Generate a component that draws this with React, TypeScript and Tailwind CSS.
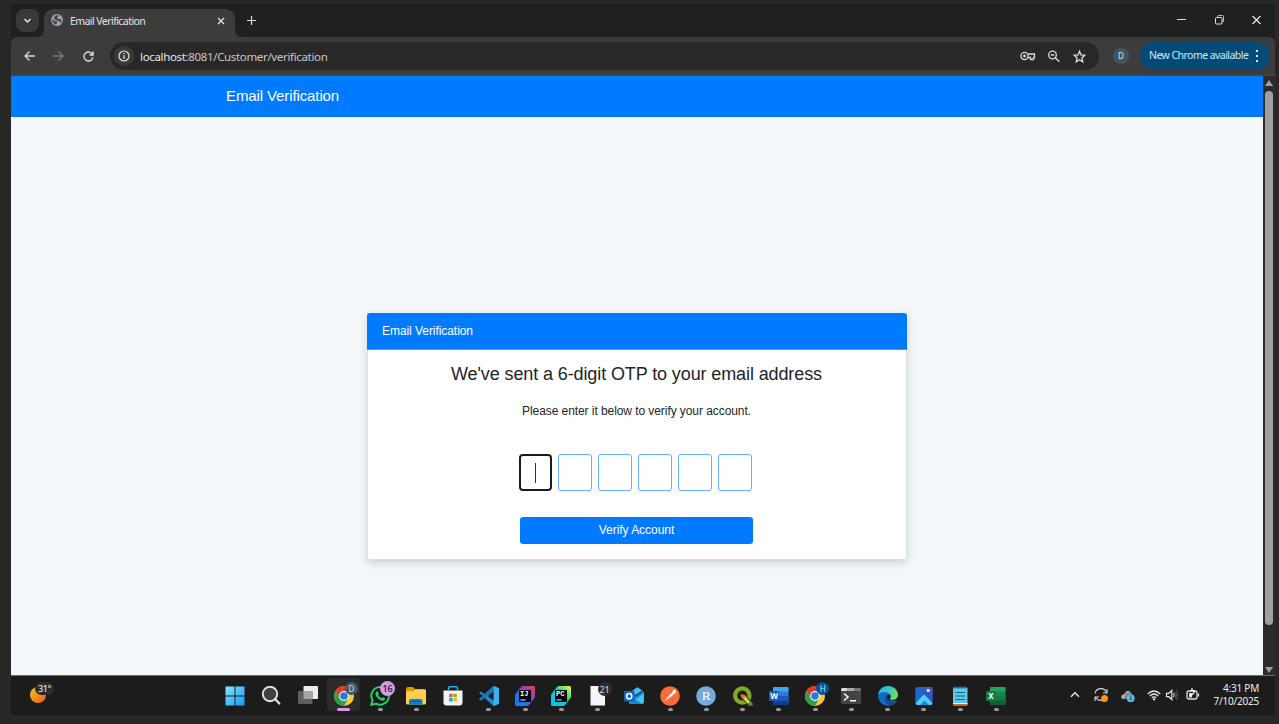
import React from "react";

type P = { children: React.ReactNode; size?: number; box?: string };

function Svg({ children, size = 20, box = "0 0 20 20" }: P) {
  return (
    <svg width={size} height={size} viewBox={box} fill="none" className="block shrink-0">
      {children}
    </svg>
  );
}

function Chrome({ letter, fill }: { letter: string; fill: string }) {
  return (
    <div className="relative">
      <Svg>
        <circle cx="10" cy="10" r="10" fill="#fcc934" />
        <path d="M10 5.200H18.770A10 10 0 0 0 1.340 5L5.840 12.400L10 10Z" fill="#e33b2e" />
        <path d="M1.340 5A10 10 0 0 0 10 20L14.160 12.400L10 10L5.840 12.400Z" fill="#2aa24c" />
        <circle cx="10" cy="10" r="4.900" fill="#fff" />
        <circle cx="10" cy="10" r="3.800" fill="#2878e8" />
      </Svg>
      <span
        className={`absolute -top-[4px] left-[11px] flex h-[13px] w-[13px] items-center justify-center rounded-full text-[8px] leading-none text-[#c9e6f7] ${fill}`}
      >
        {letter}
      </span>
    </div>
  );
}

function JetBrains({ letters, id, a, b, c }: { letters: string; id: string; a: string; b: string; c: string }) {
  return (
    <Svg>
      <defs>
        <linearGradient id={id} x1="0" y1="1" x2="1" y2="0">
          <stop offset="0.25" stopColor={a} />
          <stop offset="0.6" stopColor={b} />
          <stop offset="1" stopColor={c} />
        </linearGradient>
      </defs>
      <path d="M6 1Q6.600 0 8 0H18.500Q20 0 20 1.500V10.500Q20 11.500 19.300 12.300L14 19Q13.300 20 12 20H1.500Q0 20 0 18.500V9.500Q0 8.500 .6 7.800Z" fill={`url(#${id})`} />
      <path d="M4 4H16V16H4Z" fill="#000" />
      <text x="5" y="10" fontSize="7" fontWeight="700" fontFamily="Liberation Mono, monospace" fill="#fff">{letters}</text>
      <path d="M5.500 14H10.500" stroke="#fff" strokeWidth="1" />
    </Svg>
  );
}

function OfficeIcon({ letter, tones, plate }: { letter: string; tones: string[]; plate: string }) {
  return (
    <Svg>
      <rect x="4" y="1" width="15.500" height="18" rx="1.200" fill={tones[1]} />
      <path d="M5.200 1H18.300Q19.500 1 19.500 2.200V5.500H4V2.200Q4 1 5.200 1Z" fill={tones[0]} />
      <path d="M4 10H19.500V14.500H4Z" fill={tones[2]} />
      <path d="M4 14.500H19.500V17.800Q19.500 19 18.300 19H5.200Q4 19 4 17.800Z" fill={tones[3]} />
      <rect x="0" y="5" width="10" height="10" rx="1" fill={plate} />
      <text x="5" y="12.800" textAnchor="middle" fontSize="8" fontWeight="700" fontFamily="Noto Sans, sans-serif" fill="#fff">{letter}</text>
    </Svg>
  );
}

const WindowsLogo = () => (
  <Svg>
    <defs>
      <linearGradient id="win" x1="0" y1="0" x2="1" y2="1" gradientUnits="objectBoundingBox">
        <stop stopColor="#8be3fd" />
        <stop offset="1" stopColor="#129bf5" />
      </linearGradient>
    </defs>
    <path d="M.5.500H9.500V9.500H.5ZM10.500.500H19.500V9.500H10.500ZM.5 10.500H9.500V19.500H.5ZM10.500 10.500H19.500V19.500H10.500Z" fill="url(#win)" />
  </Svg>
);

const Search = () => (
  <Svg>
    <circle cx="9" cy="8" r="7.200" fill="#414141" stroke="#e2e2e2" strokeWidth="1.900" />
    <path d="M14 13L18.300 17.500" stroke="#e2e2e2" strokeWidth="2.300" strokeLinecap="round" />
  </Svg>
);

const TaskView = () => (
  <Svg>
    <rect x="5.500" y="0" width="14.500" height="13" rx=".8" fill="#ececec" />
    <rect x="0" y="5" width="14.500" height="13" rx=".8" fill="#606060" />
    <path d="M5.500 5H14.500V13H5.500Z" fill="#a5a5a5" />
  </Svg>
);

const WhatsApp = () => (
  <div className="relative">
    <Svg>
      <path d="M1.200 19L2.500 14.200A8.800 8.800 0 1 1 6 17.600Z" stroke="#25d366" strokeWidth="1.900" strokeLinejoin="round" />
      <path d="M6.300 5.700Q7.400 4.900 8 6L8.700 7.600Q8.900 8.200 8 9.100Q9.200 11.400 11.500 12.300L12.600 11.200L15 12.300Q15.200 14 13.500 14.700Q11.300 15.500 7.900 12.300Q4 8.300 6.300 5.700Z" fill="#25d366" />
    </Svg>
    <span className="absolute -top-[5px] left-[10px] flex h-[15px] w-[15px] items-center justify-center rounded-full bg-[#d69be4] text-[9px] font-medium leading-none text-[#1b121d]">16</span>
  </div>
);

const Folder = () => (
  <Svg>
    <path d="M0 3Q0 1 2 1H7L9 3H18.500Q20 3 20 4.500V8H0Z" fill="#db9700" />
    <path d="M0 6Q0 5 1 5H8L9.500 3.500H18.500Q20 3.500 20 5V17Q20 18.500 18.500 18.500H1.500Q0 18.500 0 17Z" fill="#ffd04c" />
    <path d="M3 18.500V15Q3 13 5 13H14.500Q16.500 13 16.500 15V18.500Z" fill="#127bd2" />
    <path d="M6 15.500H13.500" stroke="#075591" />
  </Svg>
);

const Store = () => (
  <Svg>
    <path d="M.5 4.500H19.500V16.500Q19.500 19.500 16.500 19.500H3.500Q.5 19.500 .5 16.500Z" fill="#f3f3f3" />
    <path d="M5.500 5V2Q5.500.8 7 .8H13Q14.500.8 14.500 2V5" stroke="#20b2e9" strokeWidth="1.400" />
    <path d="M6.200 7.800H9.600V11.200H6.200Z" fill="#f35325" />
    <path d="M10.400 7.800H13.800V11.200H10.400Z" fill="#81bc06" />
    <path d="M6.200 12H9.600V15.400H6.200Z" fill="#05a6f0" />
    <path d="M10.400 12H13.800V15.400H10.400Z" fill="#ffba08" />
  </Svg>
);

const Code = () => (
  <Svg>
    <path d="M14.500 0L20 2.300V17.700L14.500 20L5.500 11.700L2 14.500L0 13.300L4 10L0 6.700L2 5.500L5.500 8.300Z" fill="#2489ca" />
    <path d="M14.500 0L20 2.300V17.700L14.500 20Z" fill="#3eb0ef" />
    <path d="M14.500 5.500V14.500L8.600 10Z" fill="#1c1c1c" />
    <path d="M0 13.300L14.500 0V5.500L2 14.500Z" fill="#1478b8" />
  </Svg>
);

const Doc = () => (
  <div className="relative">
    <Svg>
      <path d="M2.500 0H12L17 6V19.500H2.500Z" fill="#f5f5f5" />
    </Svg>
    <span className="absolute -top-[4px] left-[10px] flex h-[14px] w-[14px] items-center justify-center rounded-full bg-[#2b2c30] text-[9px] leading-none text-[#dedede]">21</span>
  </div>
);

const Outlook = () => (
  <Svg>
    <path d="M5 7L13.500 1L20 6V15Q20 18 17 18H5Z" fill="#1683d9" />
    <path d="M6 6.500L13.500 1.500L19 5.500L12 10.500Z" fill="#0b4f91" />
    <path d="M9 4.500L13.500 1.500L18 4.500L11 9Z" fill="#50bce9" />
    <path d="M20 7V15Q20 18 17 18H5L20 7Z" fill="#41c4ef" />
    <path d="M5 9L18 18H5Z" fill="#1889da" />
    <rect x="0" y="5" width="10.500" height="10.500" rx="1" fill="#1068bd" />
    <circle cx="5.200" cy="10.200" r="2.600" stroke="#fff" strokeWidth="1.500" />
  </Svg>
);

const Postman = () => (
  <Svg>
    <circle cx="10" cy="10" r="9.800" fill="#ff6c37" />
    <path d="M4.500 15L8 10.500L13 6L14.500 7.500L9.500 12L4.500 15Z" fill="#fff" />
    <circle cx="14.300" cy="5.600" r="1.800" fill="#fff" />
    <path d="M8 10.500L9.500 12" stroke="#ff6c37" strokeWidth=".6" />
  </Svg>
);

const RStudio = () => (
  <Svg>
    <circle cx="10" cy="10" r="9.800" fill="#75aadb" />
    <text x="10.200" y="14" textAnchor="middle" fontFamily="Liberation Serif, serif" fontSize="13.500" fill="#fff">R</text>
  </Svg>
);

const Qgis = () => (
  <Svg>
    <circle cx="9.300" cy="9.500" r="7.200" stroke="#82aa28" strokeWidth="4.200" />
    <path d="M9 9L13 9.500L20 17.500V20H16L9.500 13Z" fill="#5f8d2b" stroke="#1c1c1c" strokeWidth=".6" />
    <path d="M7.500 8L12 9L14 12L12 14L8.500 12Z" fill="#ee7913" />
    <path d="M12 11L17 16.500L14.500 17L11 13Z" fill="#f4e45a" />
  </Svg>
);

const Terminal = () => (
  <Svg>
    <rect x="0" y="2" width="20" height="16" rx="1.500" fill="#444" />
    <path d="M1.500 2H6.500V5H0V3.500Q0 2 1.500 2Z" fill="#ddd" />
    <path d="M6.500 2H13V5H6.500Z" fill="#aaa" />
    <path d="M13 2H18.500Q20 2 20 3.500V5H13Z" fill="#777" />
    <path d="M3 7.500L7 11L3 14.500M9 14.700H15" stroke="#fff" strokeWidth="1.500" />
  </Svg>
);

const Edge = () => (
  <Svg>
    <defs>
      <linearGradient id="edge" x1="0" y1="0" x2="1" y2=".3">
        <stop stopColor="#2ab6e9" />
        <stop offset=".6" stopColor="#31c8c5" />
        <stop offset="1" stopColor="#70df4e" />
      </linearGradient>
    </defs>
    <circle cx="10" cy="10" r="10" fill="#136bc4" />
    <path d="M.2 8.500C1 3.500 5 0 10 0C15.500 0 20 4 20 8.800C20 12 17.500 14 14.500 14C12.500 14 11.500 13.200 11.800 12.500C12.500 11.500 13 11 12.500 9.500C11.500 5.500 4 4.500 .2 8.500Z" fill="url(#edge)" />
    <path d="M8.500 8.500C5 12 7 18.500 12 19.800C15 19.500 17.500 17.500 18.800 15.200C14 17.500 9 14.500 8.500 8.500Z" fill="#0b4a9c" />
    <path d="M9.500 9C8 12 10.500 16.200 19 14.400L20 13V9.500C19.500 13.500 16 14.300 14 14C12.500 13.800 11.500 13.200 11.800 12.500C12.700 11.500 13 10.500 12.500 9.500C11.800 8.300 10 8 9.500 9Z" fill="#1c1c1c" />
  </Svg>
);

const Photos = () => (
  <Svg>
    <defs>
      <linearGradient id="photo" x1="0" y1="1" x2="1" y2="0">
        <stop stopColor="#0c7de0" />
        <stop offset=".65" stopColor="#205fbf" />
        <stop offset="1" stopColor="#7a4ac7" />
      </linearGradient>
    </defs>
    <rect x="1.300" y="1" width="17.400" height="18" rx="2.200" fill="url(#photo)" />
    <path d="M2 17L8.300 10Q10 8 11.800 10L18.300 17Q18 19 16.500 19H3.500Q2 19 2 17Z" fill="#56cbf6" />
    <path d="M6 19L10.500 14.500L15 19Z" fill="#1685e3" />
    <circle cx="14.200" cy="4.500" r="1.500" fill="#fff" />
  </Svg>
);

const Notepad = () => (
  <Svg>
    <rect x="3" y="1.500" width="14.500" height="18" rx="1" fill="#5cc8ea" />
    <path d="M3 17.500H17.500V18.700Q17.500 19.700 16.500 19.700H4Q3 19.700 3 18.700Z" fill="#d76a1c" />
    <path d="M3 17H17.500V18H3Z" fill="#eee" />
    <path d="M5 0V3M8.300 0V3M11.600 0V3M15 0V3" stroke="#176789" strokeWidth="1.200" />
    <path d="M5.500 6.500H15M5.500 10H15M5.500 13.500H15" stroke="#126487" strokeWidth="1.200" />
  </Svg>
);

const dock: { icon: React.ReactNode; dot?: boolean; active?: boolean }[] = [
  { icon: <WindowsLogo /> },
  { icon: <Search /> },
  { icon: <TaskView /> },
  { icon: <Chrome letter="D" fill="bg-[#405a66]" />, active: true },
  { icon: <WhatsApp />, dot: true },
  { icon: <Folder />, dot: true },
  { icon: <Store /> },
  { icon: <Code />, dot: true },
  { icon: <JetBrains letters="IJ" id="ij" a="#087cfa" b="#734ebc" c="#ff3358" />, dot: true },
  { icon: <JetBrains letters="PC" id="pc" a="#07c3f2" b="#21d789" c="#fcf84a" />, dot: true },
  { icon: <Doc />, dot: true },
  { icon: <Outlook /> },
  { icon: <Postman />, dot: true },
  { icon: <RStudio />, dot: true },
  { icon: <Qgis />, dot: true },
  { icon: <OfficeIcon letter="W" tones={["#41a5ee", "#2b7cd3", "#185abd", "#103f91"]} plate="#185abd" />, dot: true },
  { icon: <Chrome letter="H" fill="bg-[#075391]" />, dot: true },
  { icon: <Terminal />, dot: true },
  { icon: <Edge />, dot: true },
  { icon: <Photos />, dot: true },
  { icon: <Notepad />, dot: true },
  { icon: <OfficeIcon letter="X" tones={["#21a366", "#168852", "#107c41", "#185c37"]} plate="#107c41" />, dot: true },
];

function TabStrip() {
  return (
    <div className="flex h-[33px] bg-[#1f2020] pl-[5px]">
      <div className="mt-[5px] flex h-[23px] w-[23px] items-center justify-center rounded-[8px] bg-[#393939]">
        <Svg size={9} box="0 0 9 9"><path d="M1.500 3L4.500 6L7.500 3" stroke="#e3e3e3" strokeWidth="1.500" /></Svg>
      </div>
      <div className="relative ml-[5px] mt-[5px] flex h-[28px] w-[191px] items-start rounded-t-[9px] bg-[#3c3c3c] pl-[7px] pt-[5px]">
        <svg className="absolute -left-[7px] bottom-0" width="7" height="7"><path d="M7 0V7H0Q7 7 7 0Z" fill="#3c3c3c" /></svg>
        <svg className="absolute -right-[7px] bottom-0" width="7" height="7"><path d="M0 0V7H7Q0 7 0 0Z" fill="#3c3c3c" /></svg>
        <Svg size={12} box="0 0 12 12">
          <circle cx="6" cy="6" r="5.900" fill="#a2a8af" />
          <path d="M1.300 5L4 7.200L6.300 7.600L6.100 9L5.200 10.800C3 10.500 1.200 8.500 1.300 5ZM4.500 1.500L7.500 1L7.300 2.500L6 3.500L6.700 4.800L9.300 5L10.700 6.500L10.500 8.300L9.200 9.200L8.500 7.300L6.500 6.800L3.500 5.500L3 3.500Z" fill="#41454a" />
        </Svg>
        <span className="ml-[7px] mt-[1px] w-[147px] whitespace-nowrap text-[10.5px] leading-[13px] tracking-[-0.56px] text-[#e3e3e3]">Email Verification</span>
        <div className="mt-[3px]"><Svg size={8} box="0 0 8 8"><path d="M1 1L7 7M7 1L1 7" stroke="#e3e3e3" strokeWidth="1.300" /></Svg></div>
      </div>
      <div className="ml-[12px] mt-[12px]"><Svg size={9} box="0 0 9 9"><path d="M4.500 0V9M0 4.500H9" stroke="#e3e3e3" strokeWidth="1.200" /></Svg></div>
      <div className="ml-auto mt-[11px] flex w-[99px] justify-between pr-[13px]">
        <Svg size={11} box="0 0 11 11"><path d="M1 4.500H10" stroke="#ddd" /></Svg>
        <Svg size={11} box="0 0 11 11"><rect x="1.500" y="2.500" width="6.500" height="6.500" rx="1" stroke="#ddd" /><path d="M3.500 2.500V1.500Q3.500.5 4.500.5H8.500Q9.500.5 9.500 1.500V6Q9.500 7 8.500 7H8" stroke="#ccc" strokeWidth=".9" /></Svg>
        <Svg size={11} box="0 0 11 11"><path d="M1.500 1L9.500 9M9.500 1L1.500 9" stroke="#eee" strokeWidth="1.100" /></Svg>
      </div>
    </div>
  );
}

function Toolbar() {
  return (
    <div className="bg-[#1f2020]">
      <div className="flex h-[39px] items-center rounded-t-[6px] border-b border-[#464646] bg-[#3c3c3c] pl-[13px] pr-[5px]">
        <Svg size={11} box="0 0 11 11"><path d="M11 5H1M5.500 .5L1 5L5.500 9.500" stroke="#d8d8d8" strokeWidth="1.300" /></Svg>
        <div className="ml-[18px]"><Svg size={11} box="0 0 11 11"><path d="M0 5H10M5.500 .5L10 5L5.500 9.500" stroke="#7a7a7a" strokeWidth="1.300" /></Svg></div>
        <div className="ml-[19px]"><Svg size={11} box="0 0 11 11"><path d="M9.600 3.700A4.500 4.500 0 1 0 9.900 6.300M10 .5V4H6.500" stroke="#dedede" strokeWidth="1.400" /></Svg></div>
        <div className="ml-[16px] flex h-[28px] w-[989px] items-center rounded-full bg-[#282828] pl-[4px] pr-[12px]">
          <div className="flex h-[20px] w-[20px] items-center justify-center rounded-full bg-[#3a3a3a]">
            <Svg size={12} box="0 0 12 12"><circle cx="6" cy="6" r="5" stroke="#e3e3e3" strokeWidth="1.200" /><path d="M6 5.300V9M6 3V4.300" stroke="#e3e3e3" strokeWidth="1.200" /></Svg>
          </div>
          <span className="ml-[6px] mt-[1px] whitespace-nowrap text-[11.5px] leading-[16px] tracking-[-0.34px] text-[#c7c7c7]"><span className="text-[#e6e6e6]">localhost</span>:8081/Customer/verification</span>
          <div className="ml-auto flex items-center gap-[12px]">
            <Svg size={16} box="0 0 16 16"><path d="M8 6H14.500V9.500H13.500V11.500H10.500V9.500H8" stroke="#d8d8d8" strokeWidth="1.300" /><circle cx="4.500" cy="8" r="3.600" fill="#282828" stroke="#d8d8d8" strokeWidth="1.300" /><circle cx="4.500" cy="8" r="1.400" fill="#d8d8d8" /></Svg>
            <Svg size={12} box="0 0 12 12"><circle cx="4.500" cy="5" r="3.800" stroke="#d8d8d8" strokeWidth="1.300" /><path d="M7.300 7.800L11.300 11.800M2.800 5H6.200" stroke="#d8d8d8" strokeWidth="1.300" /></Svg>
            <Svg size={15} box="0 0 15 15"><path d="M7.500 2.200L9 6L12.700 6.300L9.900 8.900L10.800 12.800L7.500 10.700L4.200 12.800L5.100 8.900L2.300 6.300L6 6Z" stroke="#dedede" strokeWidth="1.300" /></Svg>
          </div>
        </div>
        <div className="ml-[14px] flex h-[16px] w-[16px] items-center justify-center rounded-full bg-[#405763] text-[8px] leading-none text-[#dceaf1]">D</div>
        <div className="ml-auto flex h-[28px] w-[130px] items-center rounded-full bg-[#034a77] pl-[9px] text-[10.5px] tracking-[-0.55px] text-[#cbeaff]">
          <span className="w-[105px] whitespace-nowrap">New Chrome available</span>
          <Svg size={6} box="0 0 6 12"><path d="M2 0H4V2H2Z" /></Svg>
          <svg className="-ml-[6px] block" width="6" height="12"><path d="M2 0H4V2H2ZM2 5H4V7H2ZM2 10H4V12H2Z" fill="#cbeaff" /></svg>
        </div>
      </div>
    </div>
  );
}

function VerificationPage() {
  return (
    <div className="flex h-[599px] font-['Liberation_Sans',Arial,sans-serif]">
      <div className="flex w-[1252px] flex-col bg-[#f3f7fa]">
        <header className="h-[41px] shrink-0 bg-[#007bff] pl-[215px] text-[15px] leading-[40px] tracking-[-0.11px] text-white">Email Verification</header>
        <main className="flex flex-1 flex-col pl-[356px] pt-[196px]">
          <section className="h-[247px] w-[540px] rounded-[3px] border border-[#dce1e5] bg-white shadow-[0_3px_8px_rgba(0,0,0,0.15)]">
            <h2 className="-mx-px -mt-px h-[37px] rounded-t-[3px] border-b border-[#4a9cf5] bg-[#007bff] pl-[15px] text-[12px] leading-[36px] tracking-[-0.06px] text-white">Email Verification</h2>
            <div className="flex flex-col items-center text-[#212529]">
              <h1 className="mt-[13px] pr-px text-[18px] leading-[22px] tracking-[-0.11px]">We've sent a 6-digit OTP to your email address</h1>
              <p className="mt-[17px] pr-px text-[12px] leading-[18px] tracking-[-0.07px]">Please enter it below to verify your account.</p>
              <div className="mr-[3px] mt-[34px] flex gap-[6px]">
                <div className="flex h-[37px] w-[33px] items-center justify-center rounded-[4px] border-2 border-[#1c1c1c]"><span className="h-[20px] w-px bg-[#333]" /></div>
                {[2, 3, 4, 5, 6].map((n) => (
                  <div key={n} className="h-[37px] w-[34px] rounded-[3px] border border-[#66b0ff]" />
                ))}
              </div>
              <button className="mr-px mt-[26px] h-[27px] w-[233px] rounded-[3px] bg-[#007bff] pb-[1px] text-[12px] leading-[18px] tracking-[-0.04px] text-white">Verify Account</button>
            </div>
          </section>
        </main>
      </div>
      <div className="flex w-[12px] flex-col items-center bg-[#2b2b2b] pt-[4px]">
        <Svg size={8} box="0 0 8 8"><path d="M4 0L8 6H0Z" fill="#9f9f9f" /></Svg>
        <div className="mt-[3px] h-[534px] w-[8px] rounded-full bg-[#9f9f9f]" />
        <div className="mt-auto"><Svg size={8} box="0 0 8 8"><path d="M0 0H8L4 6Z" fill="#9f9f9f" /></Svg></div>
      </div>
    </div>
  );
}

function Taskbar() {
  return (
    <div className="flex h-[40px] border-t border-[#6e6e6e] bg-[#1c1c1c]">
      <div className="w-[206px] shrink-0 pl-[19px] pt-[10px]">
        <div className="relative w-[16px]">
          <Svg size={17} box="0 0 17 17">
            <defs><linearGradient id="sun" x1="0" y1="0" x2="1" y2="1"><stop stopColor="#f6c12f" /><stop offset="1" stopColor="#ed5d0c" /></linearGradient></defs>
            <circle cx="8" cy="9" r="8" fill="url(#sun)" />
          </Svg>
          <span className="absolute -top-[4px] left-[5px] flex h-[13px] w-[19px] items-center justify-center rounded-full bg-[#2c2c2c] text-[9px] leading-none tracking-[-0.3px] text-white">31°</span>
        </div>
      </div>
      <div className="flex">
        {dock.map((d, i) => (
          <div key={i} className="flex w-[36.25px] shrink-0 flex-col items-center pt-[2px]">
            <div className={`flex h-[33px] w-[33px] flex-col items-center rounded-[4px] pt-[8px] ${d.active ? "bg-[#2b2b2b]" : ""}`}>
              {d.icon}
              {d.active && <span className="mt-[2px] h-[3px] w-[13px] rounded-full bg-[#d69be4]" />}
              {d.dot && <span className="mt-[2px] h-[3px] w-[5px] rounded-full bg-[#9a9a9a]" />}
            </div>
          </div>
        ))}
      </div>
      <div className="flex flex-1 pl-[52px] pt-[11px]">
        <Svg size={16} box="0 0 16 16"><path d="M4 9.700L8 5.700L12 9.700" stroke="#e8e8e8" strokeWidth="1.400" /></Svg>
        <div className="ml-[10px]"><Svg size={16} box="0 0 16 16"><path d="M2 6.500A6 6 0 0 1 13.500 5.500M14 2V6H10M13 10A6 6 0 0 1 2.500 10.500M2 14V10H6" stroke="#d5d5d5" strokeWidth="1.100" /><circle cx="11.500" cy="11.500" r="3.500" fill="#ff9800" /></Svg></div>
        <div className="ml-[11px]"><Svg size={16} box="0 0 16 16"><path d="M3 12Q.5 11.500 1.500 8.500Q3 7 4.500 7Q6 3 9 4Q11 4.500 11 7Q14 7.500 13 11L12 12Z" fill="#b0b0b0" /><path d="M5 10Q5 6 9 5Q12 6 11.500 8Q8 8 7 12H4Z" fill="#828282" /><circle cx="10.700" cy="11.200" r="3.900" fill="#56bce9" /><path d="M10.700 10.700V13.300M10.700 8.600V9.700" stroke="#103849" strokeWidth="1.200" /></Svg></div>
        <div className="ml-[10px]"><Svg size={16} box="0 0 16 16"><path d="M1.700 7Q8 1 14.300 7M3.700 9Q8 5 12.300 9M5.700 11Q8 8.700 10.300 11" stroke="#e8e8e8" strokeWidth="1.200" /><circle cx="8" cy="12.300" r="1.100" fill="#fff" /></Svg></div>
        <div className="ml-[2px]"><Svg size={16} box="0 0 16 16"><path d="M2.500 6.300H4.800L7.800 3.500V12.500L4.800 9.700H2.500Z" stroke="#e8e8e8" strokeWidth="1.200" /><path d="M9.500 6Q11 8 9.500 10" stroke="#e8e8e8" /><path d="M11 4.500Q13.500 8 11 11.500M12.500 3Q15 8 12.500 13" stroke="#666" strokeWidth=".8" /></Svg></div>
        <div className="ml-[4px]"><Svg size={16} box="0 0 16 16"><rect x="3" y="4" width="10" height="8" rx="2" stroke="#ddd" strokeWidth="1.300" /><path d="M14.500 6.500V9.500" stroke="#ddd" strokeWidth="1.300" /><path d="M5 6H8V10.500H5Z" fill="#ddd" /><path d="M8 1V3.500M6 3.500H10V6L7 8.500" stroke="#fff" strokeWidth="1.200" /></Svg></div>
        <div className="-mt-[5px] ml-auto w-[62px] pr-[16px] text-right text-[10px] leading-[13px] tracking-[-0.22px] text-[#eee]">
          <div className="whitespace-nowrap">4:31 PM</div>
          <div className="flex justify-end whitespace-nowrap">7/10/2025</div>
        </div>
      </div>
    </div>
  );
}

export default function App() {
  return (
    <div className="h-[724px] w-[1279px] overflow-hidden bg-[#272727] pl-[11px] pt-[4px] font-['Noto_Sans',sans-serif]">
      <div className="w-[1264px]">
        <TabStrip />
        <Toolbar />
        <VerificationPage />
        <Taskbar />
      </div>
    </div>
  );
}
